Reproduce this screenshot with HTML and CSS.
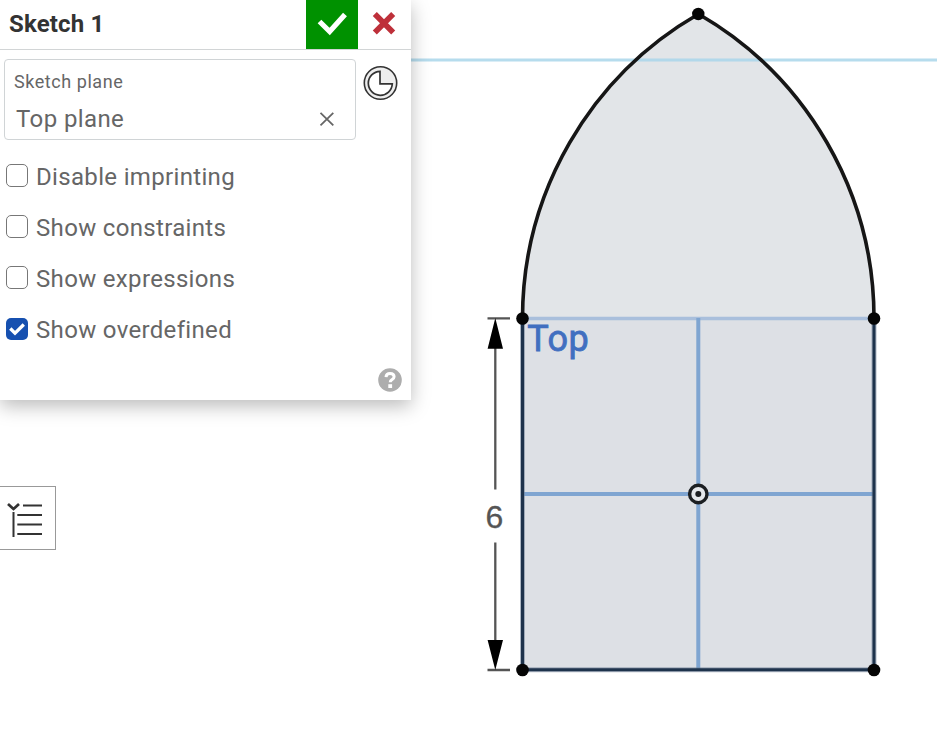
FILE: index.html
```html
<!DOCTYPE html>
<html lang="en">
<head>
<meta charset="utf-8">
<title>Sketch 1</title>
<link rel="stylesheet" href="styles.css">
</head>
<body>
<svg class="canvas" width="937" height="740" viewBox="0 0 937 740">
  <path d="M522.5 670V318.5A351.5 351.5 0 0 1 698.5 14A351.5 351.5 0 0 1 874 318.5V670Z" fill="#e2e5e8"/>
  <rect x="522.5" y="318.5" width="351.5" height="351.5" fill="#dde0e5"/>
  <path d="M400 60H937" stroke="#a9d6ea" stroke-opacity=".85" stroke-width="3"/>
  <path d="M522 318.5H874" stroke="#a9bfdc" stroke-width="3.4"/>
  <path d="M522 494H874M698.3 318V670" stroke="#7fa5d1" stroke-width="4"/>
  <path d="M522.5 318.5A351.5 351.5 0 0 1 698.5 14A351.5 351.5 0 0 1 874 318.5" fill="none" stroke="#161616" stroke-width="3.6"/>
  <path d="M522.5 318.5V669.7H874V318.5" fill="none" stroke="#6d7f96" stroke-opacity=".55" stroke-width="5"/>
  <path d="M522.5 318.5V669.7H874V318.5" fill="none" stroke="#1e334c" stroke-width="3"/>
  <g fill="#050505">
    <circle cx="698.3" cy="14" r="6.2"/><circle cx="522.5" cy="318.5" r="6.3"/>
    <circle cx="874" cy="318.5" r="6.3"/><circle cx="522.5" cy="670" r="6.3"/><circle cx="874" cy="670" r="6.3"/>
  </g>
  <circle cx="698.3" cy="494" r="8.7" fill="#e5e8ec" stroke="#1c1f22" stroke-width="3.4"/>
  <circle cx="698.3" cy="494" r="3" fill="#1c1f22"/>
  <path d="M487.5 318.3H510M487.5 670H510M495.3 345V489.5M495.3 542.5V645" stroke="#555" stroke-width="2.3"/>
  <path d="M495.3 318L503 348.8H487.6ZM495.3 670L503 640H487.6Z" fill="#000"/>
  <text class="dimension" x="485.5" y="527.5">6</text>
  <text class="plane-name" x="527.3" y="351">Top</text>
</svg>

<main class="dialog">
  <header class="titlebar">
    <h1 class="title">Sketch 1</h1>
    <button class="accept" aria-label="Accept"><svg width="52" height="49" viewBox="0 0 52 49"><path d="M13.5 21.5L23.7 31.5L39 14.5" fill="none" stroke="#fff" stroke-width="5.2"/></svg></button>
    <button class="cancel" aria-label="Cancel"><svg width="53" height="49" viewBox="0 0 53 49"><path d="M16.8 14L35.2 32.5M35.2 14L16.8 32.5" stroke="#be303a" stroke-width="5.7"/></svg></button>
  </header>
  <section class="plane-row">
    <div class="plane-field">
      <div class="plane-label">Sketch plane</div>
      <div class="plane-value"><span>Top plane</span><svg width="16" height="16" viewBox="0 0 16 16"><path d="M1.5 1.8L14.3 14.3M14.3 1.8L1.5 14.3" stroke="#666" stroke-width="1.8"/></svg></div>
    </div>
    <svg class="history" width="36" height="36" viewBox="0 0 36 36">
      <circle cx="17.5" cy="18" r="16.2" fill="#eee" stroke="#333" stroke-width="1.6"/>
      <path d="M17 6.3A12 12 0 1 0 29.3 18.8H17Z" fill="#fff" stroke="#333" stroke-width="1.7"/>
    </svg>
  </section>
  <section class="options">
    <label class="option"><span class="box"></span><span class="option-text">Disable imprinting</span></label>
    <label class="option"><span class="box"></span><span class="option-text">Show constraints</span></label>
    <label class="option"><span class="box"></span><span class="option-text">Show expressions</span></label>
    <label class="option"><span class="box checked"><svg width="22" height="22" viewBox="0 0 22 22"><path d="M4.3 10.5L9 15.2L17.8 6.5" fill="none" stroke="#fff" stroke-width="3.3"/></svg></span><span class="option-text">Show overdefined</span></label>
  </section>
  <svg class="help" width="24" height="24" viewBox="0 0 24 24">
    <circle cx="12" cy="12" r="11.8" fill="#adadad"/>
    <path d="M8 9.2C8.2 6.7 9.6 5.6 12 5.6C14.5 5.6 16.1 6.8 16.1 8.8C16.1 11.6 12.2 11.3 12.2 14.2" fill="none" stroke="#fff" stroke-width="3"/>
    <rect x="10.3" y="16.2" width="3.8" height="3.8" fill="#fff"/>
  </svg>
</main>

<button class="feature-list" aria-label="Feature list">
  <svg width="55" height="62" viewBox="0 0 55 62"><path d="M8 17L13.5 22L19 17" fill="none" stroke="#333" stroke-width="2.7"/><path d="M23 18.5H42M17.3 28H42M17.3 37.5H42M17.3 47H42M13.5 25V50" fill="none" stroke="#333" stroke-width="2"/></svg>
</button>
</body>
</html>
```
FILE: styles.css
```css
* { box-sizing: border-box; }
body {
  margin: 0;
  height: 740px;
  overflow: hidden;
  background: #fff;
  color: #666;
  font-family: Roboto, "Liberation Sans", sans-serif;
}
button { margin: 0; padding: 0; border: 0; background: #fff; }
svg { display: block; }
.canvas { position: absolute; left: 0; top: 0; }
.dimension { font: 32px "Liberation Sans", sans-serif; fill: #555; stroke: #555; stroke-width: .3px; }
.plane-name { font: 36px Roboto, sans-serif; letter-spacing: .5px; fill: #416fc0; stroke: #416fc0; stroke-width: .8px; }
.dialog {
  position: relative;
  width: 411px;
  height: 400px;
  background: #fff;
  box-shadow: 0 6px 18px rgba(0, 0, 0, .27);
}
.titlebar { display: flex; height: 50px; border-bottom: 1px solid #d2d5d6; }
.title { flex: 1; margin: 0; padding-left: 9px; font-size: 24px; line-height: 48px; font-weight: 700; letter-spacing: .15px; color: #333; }
.accept { width: 52px; background: #009100; }
.cancel { width: 53px; }
.plane-row { display: flex; gap: 7px; padding: 9px 0 0 4px; }
.plane-field { width: 352px; height: 81px; padding: 11px 20px 0 9px; border: 1px solid #d0d4d6; border-radius: 4px; }
.plane-label { font-size: 18px; line-height: 22px; letter-spacing: .55px; }
.plane-value { display: flex; align-items: center; justify-content: space-between; padding-left: 2px; margin-top: 11px; font-size: 24px; line-height: 30px; letter-spacing: .4px; }
.history { margin-top: 6px; }
.options { padding: 10px 0 0 6px; }
.option { display: flex; align-items: center; gap: 8px; height: 51px; font-size: 24px; letter-spacing: .33px; }
.option-text { line-height: 28px; padding-top: 3px; }
.box { width: 22px; height: 23px; border: 1px solid #777; border-radius: 5px; }
.checked { height: 22px; border: 0; background: #1650b0; }
.help { margin: 14px 0 0 378px; }
.feature-list { display: block; width: 56px; height: 64px; margin-top: 86px; border: 1px solid #999; border-left: 0; }
```
